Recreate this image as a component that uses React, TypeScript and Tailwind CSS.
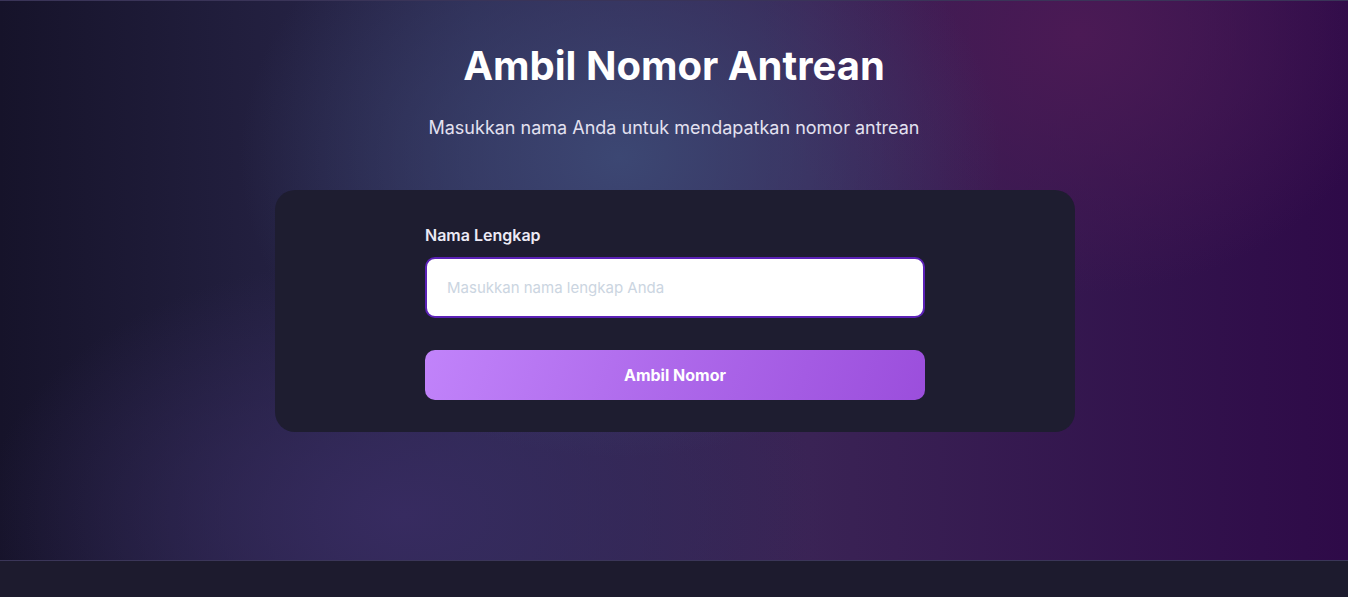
import React from "react";

export default function App() {
  return (
    <div className="min-h-screen flex flex-col font-['Inter',sans-serif] bg-[#1d1b2e]">
      <main className="h-[560px] border-t border-[#3a3458] bg-[radial-gradient(ellipse_380px_300px_at_46%_28%,#3c4773_0%,rgba(60,71,115,0)_100%),radial-gradient(ellipse_320px_260px_at_80%_6%,#4b1a55_0%,rgba(75,26,85,0)_100%),radial-gradient(ellipse_420px_260px_at_30%_92%,#372b60_0%,rgba(55,43,96,0)_100%),linear-gradient(90deg,#16132a_0%,#2c2950_35%,#3a2355_60%,#2e0a48_100%)] flex flex-col items-center">
        <h1 className="mt-[40px] text-[40px] leading-[50px] font-bold text-white">Ambil Nomor Antrean</h1>
        <p className="mt-[25px] text-[18px] leading-[24px] text-[#e3e1f0]">Masukkan nama Anda untuk mendapatkan nomor antrean</p>
        <div className="mt-[50px] ml-[2px] w-[800px] rounded-[20px] bg-[#1e1d30] flex justify-center pt-[36px] pb-[32px]">
          <div className="w-[500px] flex flex-col">
            <label className="text-[16px] leading-[18px] font-semibold text-[#eceaf5]">Nama Lengkap</label>
            <input
              className="mt-[13px] h-[61px] w-full rounded-[10px] border-2 border-[#5b21b6] bg-white px-[20px] text-[15px] text-gray-800 outline-none placeholder:text-[#cbd5e1]"
              placeholder="Masukkan nama lengkap Anda"
            />
            <button className="mt-[32px] h-[50px] w-full rounded-[10px] bg-[linear-gradient(110deg,#c183fa_0%,#ad68ea_50%,#9b4edc_100%)] text-[16px] font-bold text-white">
              Ambil Nomor
            </button>
          </div>
        </div>
      </main>
      <footer className="h-[37px] border-t border-[#3b3659] bg-[#1d1b2e]" />
    </div>
  );
}
